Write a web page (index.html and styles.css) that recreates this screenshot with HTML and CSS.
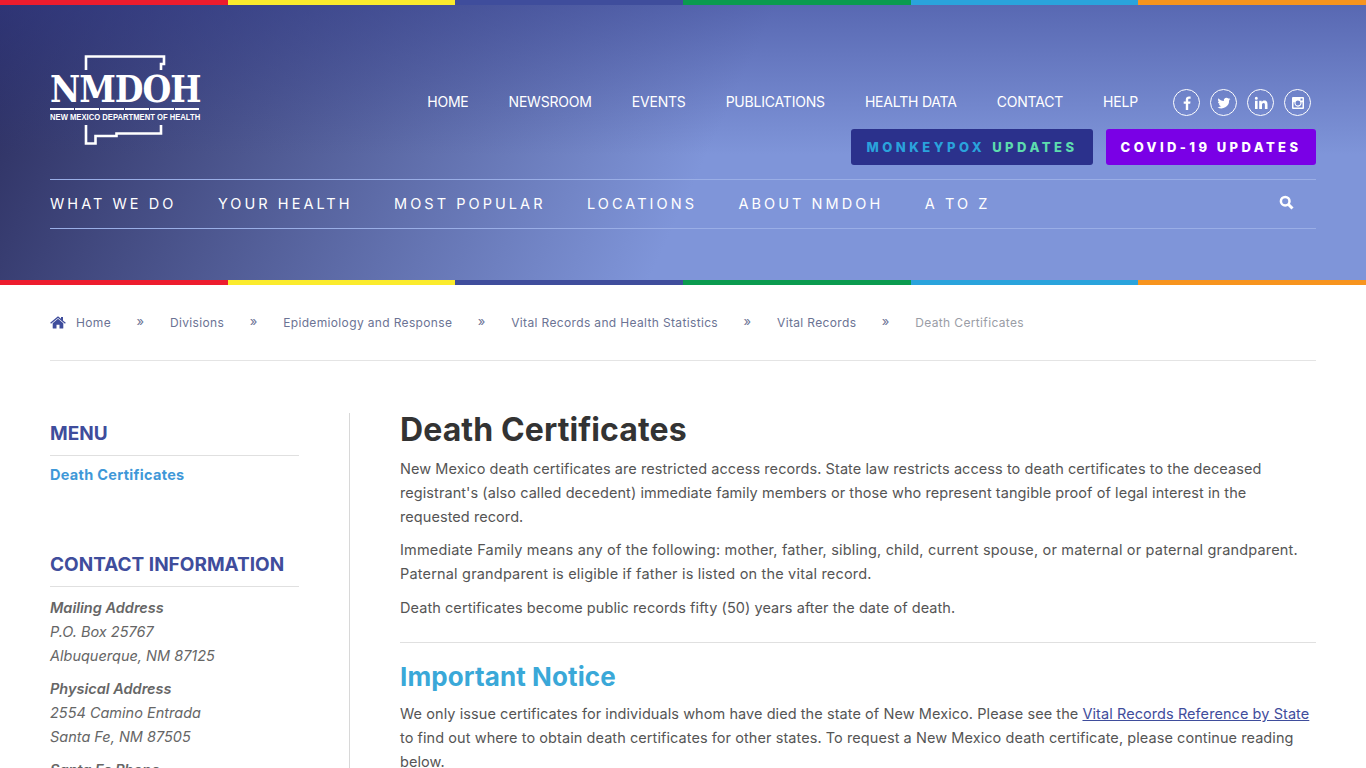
FILE: index.html

```html
<!DOCTYPE html>
<html lang="en">
<head>
    <meta charset="UTF-8">
    <meta name="viewport" content="width=device-width, initial-scale=1.0">
    <title>Death Certificates - NMDOH</title>
    <link rel="stylesheet" href="styles.css">
</head>
<body>
    <div class="stripe">
        <span class="red"></span><span class="yellow"></span><span class="indigo"></span><span class="green"></span><span class="sky"></span><span class="orange"></span>
    </div>

    <div class="header">
        <div class="header-top">
            <a class="logo" href="#">
                <svg class="logo-outline" width="151" height="91" viewBox="0 0 151 91" fill="none" stroke="#fff" stroke-width="2.6">
                    <path d="M36 15V1.500H114V9H111V15"/>
                    <path d="M36 70V88.500H45.500V81H66.500V78.500H111V70"/>
                </svg>
                <span class="logo-name">NMDOH</span>
                <span class="logo-rule"></span>
                <span class="logo-sub">NEW MEXICO DEPARTMENT OF HEALTH</span>
            </a>
            <div class="top-right">
                <div class="top-row">
                    <ul class="top-nav">
                        <li><a href="#">HOME</a></li>
                        <li><a href="#">NEWSROOM</a></li>
                        <li><a href="#">EVENTS</a></li>
                        <li><a href="#">PUBLICATIONS</a></li>
                        <li><a href="#">HEALTH DATA</a></li>
                        <li><a href="#">CONTACT</a></li>
                        <li><a href="#">HELP</a></li>
                    </ul>
                    <div class="social">
                        <a href="#"><svg width="14" height="14" viewBox="0 0 14 14" fill="#fff"><path d="M8.200 14V7.800h2l.3-2.400H8.200V3.900c0-.7.2-1.200 1.200-1.200h1.200V.6C10.400.5 9.700.5 8.900.5 7.100.5 5.800 1.600 5.800 3.600v1.800H3.700v2.400h2.100V14z"/></svg></a>
                        <a href="#"><svg width="14" height="14" viewBox="0 0 24 24" fill="#fff"><path d="M23 5.100c-.8.4-1.700.6-2.600.7.900-.6 1.600-1.400 2-2.500-.9.500-1.900.9-2.900 1.100a4.600 4.600 0 0 0-7.800 4.200C7.900 8.400 4.500 6.600 2.300 3.800a4.600 4.600 0 0 0 1.400 6.100c-.7 0-1.400-.2-2.100-.6 0 2.200 1.600 4.100 3.700 4.600-.7.200-1.400.2-2.100.1.600 1.800 2.300 3.100 4.300 3.200A9.300 9.300 0 0 1 .7 19.100a13 13 0 0 0 20-11.500c.9-.7 1.700-1.500 2.300-2.500z"/></svg></a>
                        <a href="#"><svg width="14" height="14" viewBox="0 0 14 14" fill="#fff"><path d="M1 4.800h2.600V13H1zM2.300.8a1.500 1.500 0 1 1 0 3 1.500 1.500 0 0 1 0-3zM5.200 4.800h2.500V6c.4-.7 1.300-1.400 2.600-1.400 2.700 0 3.200 1.800 3.200 4V13h-2.600V9.100c0-1 0-2.200-1.300-2.200s-1.600 1-1.600 2.100v4H5.200z"/></svg></a>
                        <a href="#"><svg width="14" height="14" viewBox="0 0 14 14"><path fill="#fff" fill-rule="evenodd" d="M2 1h10a1 1 0 0 1 1 1v10a1 1 0 0 1-1 1H2a1 1 0 0 1-1-1V2a1 1 0 0 1 1-1zm7.500 1.500v2h2v-2zM7 4.500a2.500 2.500 0 1 0 0 5 2.500 2.500 0 0 0 0-5zM2.500 6.200v5.300h9V6.200h-1a3.600 3.600 0 1 1-7 0z"/></svg></a>
                    </div>
                </div>
                <div class="update-row">
                    <a class="update-btn monkeypox" href="#"><span class="mp-blue">MONKEYPOX</span> <span class="mp-green">UPDATES</span></a>
                    <a class="update-btn covid" href="#">COVID-19 UPDATES</a>
                </div>
            </div>
        </div>

        <div class="main-nav">
            <ul>
                <li><a href="#">WHAT WE DO</a></li>
                <li><a href="#">YOUR HEALTH</a></li>
                <li><a href="#">MOST POPULAR</a></li>
                <li><a href="#">LOCATIONS</a></li>
                <li><a href="#">ABOUT NMDOH</a></li>
                <li><a href="#">A TO Z</a></li>
            </ul>
            <svg class="search-icon" width="15" height="15" viewBox="0 0 15 15" fill="none" stroke="#fff"><circle cx="6.200" cy="6.200" r="4.300" stroke-width="2.500"/><path d="M9.500 9.500l4 4" stroke-width="3"/></svg>
        </div>
    </div>

    <div class="stripe">
        <span class="red"></span><span class="yellow"></span><span class="indigo"></span><span class="green"></span><span class="sky"></span><span class="orange"></span>
    </div>

    <div class="page">
        <div class="breadcrumb">
            <svg class="home-icon" width="16" height="13" viewBox="0 0 16 13" fill="#3f4d9c"><path d="M8 2.800l5.300 4.400V12a.6.600 0 0 1-.6.600H9.500V8.800h-3v3.800H3.300a.6.600 0 0 1-.6-.6V7.200z"/><path d="M8 .3l3 2.500V1h2v3.500l2.800 2.300-.8.900L8 2 1 7.700l-.8-.9z"/></svg>
            <a href="#">Home</a><span class="sep">»</span>
            <a href="#">Divisions</a><span class="sep">»</span>
            <a href="#">Epidemiology and Response</a><span class="sep">»</span>
            <a href="#">Vital Records and Health Statistics</a><span class="sep">»</span>
            <a href="#">Vital Records</a><span class="sep">»</span>
            <span class="current">Death Certificates</span>
        </div>

        <div class="columns">
            <div class="sidebar">
                <h3>MENU</h3>
                <a class="side-link" href="#">Death Certificates</a>

                <h3 class="contact-title">CONTACT INFORMATION</h3>
                <p class="addr"><b>Mailing Address</b><br>P.O. Box 25767<br>Albuquerque, NM 87125</p>
                <p class="addr"><b>Physical Address</b><br>2554 Camino Entrada<br>Santa Fe, NM 87505</p>
                <p class="addr"><b>Santa Fe Phone</b></p>
            </div>
            <div class="content">
                <h1>Death Certificates</h1>
                <p>New Mexico death certificates are restricted access records. State law restricts access to death certificates to the deceased registrant's (also called decedent) immediate family members or those who represent tangible proof of legal interest in the requested record.</p>
                <p class="wide">Immediate Family means any of the following: mother, father, sibling, child, current spouse, or maternal or paternal grandparent. Paternal grandparent is eligible if father is listed on the vital record.</p>
                <p>Death certificates become public records fifty (50) years after the date of death.</p>
                <hr>
                <h2>Important Notice</h2>
                <p>We only issue certificates for individuals whom have died the state of New Mexico. Please see the <a href="#">Vital Records Reference by State</a> to find out where to obtain death certificates for other states. To request a New Mexico death certificate, please continue reading below.</p>
            </div>
        </div>
    </div>
</body>
</html>
```

FILE: styles.css

```css
* {
    margin: 0;
    padding: 0;
    box-sizing: border-box;
}

html, body {
    height: 768px;
    overflow: hidden;
}

body {
    font-family: Inter, 'Open Sans', sans-serif;
    background: #fff;
    color: #555;
    font-size: 14px;
}

a {
    text-decoration: none;
    color: inherit;
}

ul {
    list-style: none;
}

.stripe {
    display: grid;
    grid-template-columns: repeat(6, 1fr);
    height: 5px;
}

.red { background: #ed1c2e; }
.yellow { background: #fbeb2d; }
.indigo { background: #3f4d9c; }
.green { background: #0b9b4f; }
.sky { background: #2aa3dc; }
.orange { background: #f7941e; }

.header {
    height: 275px;
    padding: 50px 50px 0;
    color: #fff;
    background:
        linear-gradient(180deg, rgba(50, 60, 140, 0.5) 0, rgba(50, 60, 140, 0) 150px),
        linear-gradient(115deg, #2b2d5e 0%, #7f95d9 52%, #7f95d9 100%);
}

.header-top {
    display: flex;
    justify-content: space-between;
    height: 124px;
}

.logo {
    position: relative;
    display: block;
    width: 151px;
    height: 91px;
}

.logo-outline {
    position: absolute;
    left: 0;
    top: 0;
}

.logo-name {
    position: absolute;
    left: 0;
    top: 13.500px;
    font-family: 'DejaVu Serif', serif;
    font-weight: bold;
    font-size: 37px;
    line-height: 40px;
    letter-spacing: -1.200px;
    white-space: nowrap;
    transform: scaleX(0.895);
    transform-origin: left center;
}

.logo-rule {
    position: absolute;
    left: 0;
    top: 53px;
    width: 150px;
    height: 2px;
    background: repeating-linear-gradient(90deg, #fff 0, #fff 24px, transparent 24px, transparent 25px);
}

.logo-sub {
    position: absolute;
    left: 0;
    top: 57px;
    font-family: 'Liberation Sans', sans-serif;
    font-weight: bold;
    font-size: 9px;
    line-height: 10px;
    white-space: nowrap;
    transform: scaleX(0.85);
    transform-origin: left center;
}

.top-right {
    display: flex;
    flex-direction: column;
    align-items: flex-end;
}

.top-row {
    display: flex;
    align-items: center;
    height: 33px;
    margin-top: 31px;
    margin-right: 5px;
}

.top-nav {
    display: flex;
    gap: 40px;
    margin-bottom: 2px;
    font-size: 14px;
    letter-spacing: -0.2px;
}

.social {
    display: flex;
    gap: 10px;
    margin-left: 35px;
}

.social a {
    display: flex;
    align-items: center;
    justify-content: center;
    width: 27px;
    height: 27px;
    border: 1px solid #fff;
    border-radius: 50%;
}

.update-row {
    display: flex;
    gap: 13px;
    margin-top: 10px;
}

.update-btn {
    display: flex;
    gap: 7px;
    align-items: center;
    justify-content: center;
    height: 36px;
    border-radius: 3px;
    font-size: 13px;
    font-weight: 800;
    letter-spacing: 3.400px;
}

.monkeypox {
    width: 242px;
    background: #2b318c;
    letter-spacing: 3.500px;
}

.mp-blue { color: #2aa3dc; }
.mp-green { color: #5ddcae; }

.covid {
    width: 210px;
    background: #7a00e6;
}

.main-nav {
    display: flex;
    justify-content: space-between;
    align-items: center;
    height: 50px;
    border-top: 1px solid #9aaee6;
    border-bottom: 1px solid #9aaee6;
}

.main-nav ul {
    display: flex;
    gap: 41.500px;
    padding-bottom: 2px;
    font-size: 14.500px;
    font-weight: 400;
    letter-spacing: 3.050px;
}

.search-icon {
    margin-right: 22px;
    margin-top: -3px;
}

.page {
    padding: 0 50px;
}

.breadcrumb {
    display: flex;
    align-items: center;
    height: 76px;
    border-bottom: 1px solid #e4e4e4;
    font-size: 12px;
    letter-spacing: 0.35px;
    color: #6b7394;
}

.home-icon {
    margin-right: 10px;
}

.sep {
    margin: -4px 25.500px 0;
    color: #6b7394;
    font-size: 13px;
}

.current {
    color: #9a9da6;
}

.columns {
    display: grid;
    grid-template-columns: 300px 1fr;
    margin-top: 52px;
}

.sidebar {
    height: 400px;
    border-right: 1px solid #d8d8d8;
    padding-right: 50px;
}

.sidebar h3 {
    height: 43px;
    padding-top: 9px;
    border-bottom: 1px solid #e0e0e0;
    color: #3f4d9c;
    font-size: 19px;
    font-weight: 700;
    line-height: 24px;
}

.side-link {
    display: block;
    margin-top: 8px;
    color: #3f98d8;
    font-size: 14.500px;
    font-weight: 700;
    line-height: 22px;
    letter-spacing: 0.3px;
}

.sidebar .contact-title {
    margin-top: 58px;
}

.addr {
    margin-top: 9px;
    font-size: 14.500px;
    font-style: italic;
    line-height: 24px;
    color: #666;
}

.addr b {
    font-weight: 600;
}

.content {
    padding-left: 50px;
}

h1 {
    color: #333;
    font-size: 32px;
    font-weight: 700;
    line-height: 34px;
    letter-spacing: 0.1px;
}

.content p {
    margin-top: 10px;
    font-size: 14.500px;
    line-height: 24px;
    letter-spacing: 0.07px;
}

.content .wide {
    margin-top: 9px;
    letter-spacing: 0.18px;
}

hr {
    border: 0;
    border-top: 1px solid #e0e0e0;
    margin: 22px 0 0;
}

h2 {
    margin-top: 17px;
    margin-bottom: 8px;
    color: #3aa8d8;
    font-size: 26px;
    font-weight: 700;
    line-height: 34px;
    letter-spacing: 0.1px;
}

.content h2 + p {
    margin-top: 8px;
}

.content p a {
    color: #3f4d9c;
    text-decoration: underline;
}
```
